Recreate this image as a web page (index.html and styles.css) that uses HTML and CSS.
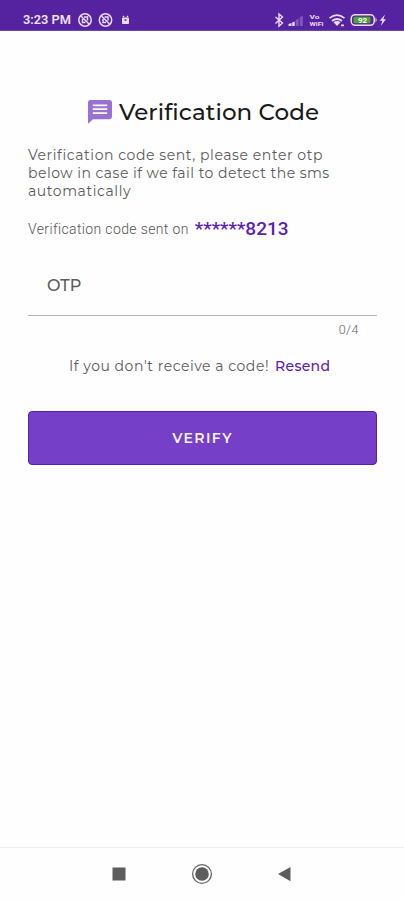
FILE: index.html
```html
<!DOCTYPE html>
<html lang="en">
<head>
<meta charset="utf-8">
<title>Verification Code</title>
<link rel="stylesheet" href="styles.css">
</head>
<body>
<div class="screen">
  <header class="status">
    <span class="clock">3:23 PM</span>
    <svg class="status-left" width="56" height="16" viewBox="0 0 56 16" fill="none" stroke="#e9dcfa" stroke-width="1.5">
      <g id="blocked"><circle cx="8" cy="8" r="6.2"/><path d="M4 4l8 8M5.5 7v3.5h3M7 5h3.5v3.5"/></g>
      <use href="#blocked" x="20.5"/>
      <path d="M45.5 6h6v5.5h-6z" fill="#e9dcfa" stroke-width="1"/><path d="M46 4l1 1M51 4l-1 1"/><path d="M47.5 8h2" stroke="#5522a0"/>
    </svg>
    <svg class="status-right" width="115" height="18" viewBox="0 0 115 18">
      <path d="M1.5 6l7 6-3.5 3.2V3l3.5 3-7 6.5" fill="none" stroke="#e9dcfa" stroke-width="1.4"/>
      <path d="M14.5 15v-2l3-1v3zM18.2 15v-3.6l2.5-1V15z" fill="#e9dcfa"/>
      <path d="M21.7 15v-6l3-1.5V15zM25.8 15V6.2l3-1.7V15z" fill="#8058bd"/>
      <text class="vo" x="35.5" y="8" textLength="10" lengthAdjust="spacingAndGlyphs">Vo</text>
      <text class="vo" x="35.5" y="15.4" textLength="14" lengthAdjust="spacingAndGlyphs">WiFi</text>
      <g fill="none" stroke="#e9dcfa" stroke-width="1.7"><path d="M55.5 7.2q7.5-6 15 0M58 10q5-4 10 0"/></g>
      <path d="M59.5 11.3q3.5-2.6 7 0L63 15zM67 13.5h3v1.8h-3z" fill="#e9dcfa"/>
      <rect x="77.2" y="3.7" width="23" height="10.6" rx="4" fill="#5522a0" stroke="#e9dcfa" stroke-width="1.5"/>
      <rect x="79.5" y="5.8" width="17" height="6.4" rx="1.5" fill="#48a829"/>
      <path d="M101.5 6.5q2.4 2.5 0 5z" fill="#e9dcfa"/>
      <text class="charge" x="84" y="12" textLength="9">92</text>
      <path d="M111 3.5l-5.3 6.2h2.7l-1.5 5 5-6.5h-2.6z" fill="#e9dcfa"/>
    </svg>
  </header>
  <main>
    <div class="title">
      <svg width="24" height="24" viewBox="0 0 24 24"><path d="M2.6 0h19A2.4 2.4 0 0 1 24 2.4v14.4a2.4 2.4 0 0 1-2.4 2.4H5L0 23.8V2.4A2.4 2.4 0 0 1 2.4 0z" fill="#9a70d5"/><path d="M4.8 5.3h14.4M4.8 9.2h14.4M4.8 13.2h14.4" stroke="#fff" stroke-width="1.7"/></svg>
      <h1>Verification Code</h1>
    </div>
    <p class="intro"><span class="wide">Verification code sent, please enter otp</span><br>below in case if we fail to detect the sms<br><span class="wide">automatically</span></p>
    <p class="sent"><span>Verification code sent on</span><b>******8213</b></p>
    <div class="field"><span>OTP</span></div>
    <div class="counter">0/4</div>
    <p class="resend"><span>If you don't receive a code!</span><a>Resend</a></p>
    <button class="verify">VERIFY</button>
  </main>
  <nav>
    <svg width="20" height="22" viewBox="0 0 20 22"><rect x="3.5" y="4.5" width="13" height="13" fill="#5d5d5d"/></svg>
    <svg width="22" height="22" viewBox="0 0 22 22"><circle cx="11" cy="11" r="9.4" fill="none" stroke="#666" stroke-width="1.3"/><circle cx="11" cy="11" r="6.8" fill="#5d5d5d"/></svg>
    <svg width="20" height="22" viewBox="0 0 20 22"><path d="M3 11L15.5 4v14.2z" fill="#5d5d5d"/></svg>
  </nav>
</div>
</body>
</html>
```

FILE: styles.css
```css
* { box-sizing: border-box; }
body { margin: 0; background: #fefefe; font-family: Montserrat, Inter, sans-serif; color: #5b5b5b; }
.screen { width: 404px; height: 900px; display: flex; flex-direction: column; }
.status { height: 31px; background: #5522a0; border-bottom: 1px solid #7047ae; display: flex; align-items: center; padding: 9px 15px 0 23px; flex: none; }
.clock { font: 600 12.8px/18px Roboto, sans-serif; color: #eee3fb; width: 54px; white-space: nowrap; }
.status-right { margin-left: auto; }
.vo { font: 700 6px Roboto, sans-serif; fill: #e9dcfa; }
.charge { font: 700 8px Roboto, sans-serif; fill: #fff; }
main { padding: 67px 27px 0 28px; flex: 1; }
p { margin: 0; }
.title { display: flex; height: 27px; align-items: center; gap: 7px; padding-left: 60px; }
h1 { margin: 0; font-size: 23px; line-height: 27px; font-weight: 500; color: #191919; white-space: nowrap; letter-spacing: .07px; padding-top: 1px; }
.intro { margin-top: 21px; font-size: 14px; line-height: 18px; white-space: nowrap; letter-spacing: .48px; }
.wide { letter-spacing: .58px; }
.sent { margin-top: 18px; height: 22px; display: flex; align-items: center; gap: 6px; font: 300 14px/22px Roboto, sans-serif; color: #555; letter-spacing: .37px; white-space: nowrap; }
.sent b { font-size: 19px; font-weight: 500; color: #5b20b5; letter-spacing: 0; }
.field { margin-top: 23px; height: 53px; border-bottom: 1px solid #b4b4b4; padding: 13px 18px 0 19px; font-size: 16px; line-height: 20px; font-weight: 500; }
.counter { padding: 6px 18px 0 0; text-align: right; font: 300 12.5px/16px Roboto, sans-serif; color: #666; letter-spacing: .5px; }
.resend { margin-top: 19px; padding-left: 41px; font-size: 14px; line-height: 18px; display: flex; gap: 6px; white-space: nowrap; letter-spacing: .53px; }
.resend a { color: #5b20b5; font-weight: 500; letter-spacing: .3px; }
.verify { display: block; margin-top: 36px; width: 349px; height: 54px; border: 1px solid #5a1fb0; border-radius: 4px; background: #753fc7; color: #f7f1ff; font-family: inherit; font-size: 14px; font-weight: 600; letter-spacing: 1.4px; }
nav { height: 53px; flex: none; border-top: 1px solid #eee; display: flex; align-items: center; justify-content: space-between; padding: 0 109px; }
```
